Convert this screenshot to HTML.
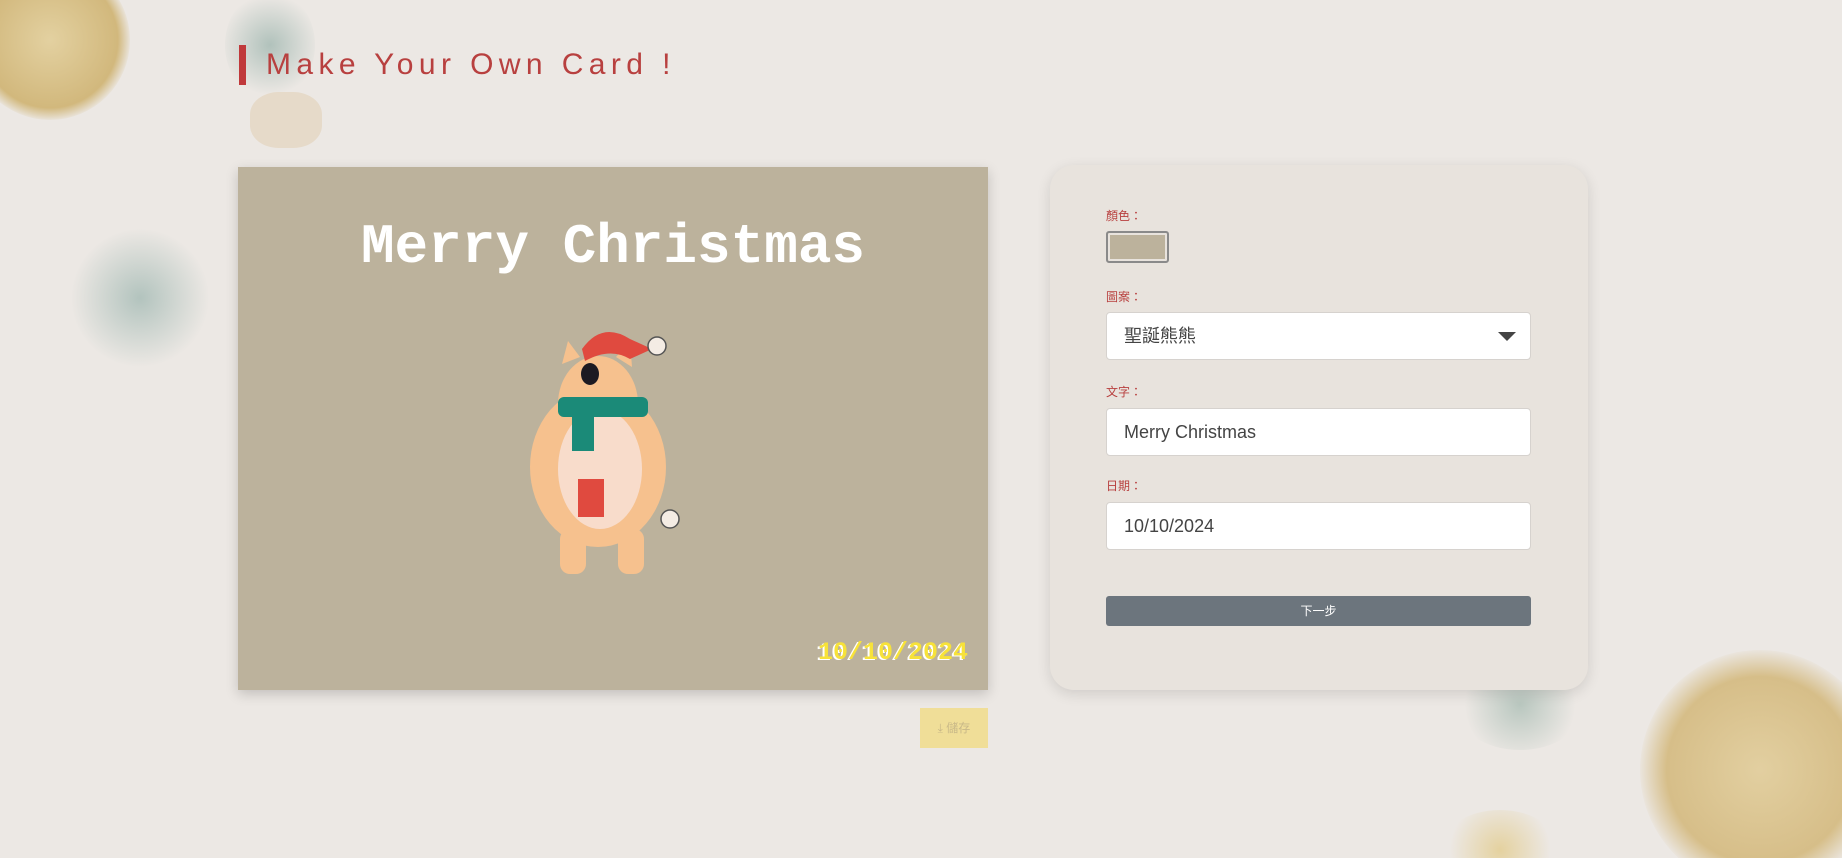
<!DOCTYPE html>
<html><head><meta charset="utf-8"><style>
*{margin:0;padding:0;box-sizing:border-box}
html,body{width:1842px;height:858px;overflow:hidden}
body{background:#ece8e4;position:relative;font-family:"Liberation Sans","Noto Sans CJK TC",sans-serif}
.deco{position:absolute;border-radius:50%;opacity:.75}
.title{position:absolute;left:239px;top:45px;height:40px;border-left:7px solid #c0393b;padding-left:20px;font-size:30px;letter-spacing:5.4px;color:#b8403f;line-height:40px}
.card{position:absolute;left:238px;top:167px;width:750px;height:523px;background:#bcb29c;box-shadow:0 4px 12px rgba(0,0,0,.18)}
.mc{position:absolute;left:0;width:100%;top:47px;text-align:center;font-family:"Liberation Mono",monospace;font-weight:bold;font-size:56px;color:#fff;line-height:66px}
.date{position:absolute;right:20px;top:471px;font-family:"Liberation Mono",monospace;font-weight:bold;font-size:25px;color:#f7e23a;text-shadow:-2px 1px 0 #fff}
.save{position:absolute;left:920px;top:708px;width:68px;height:40px;background:#f0de98;color:#c8b888;font-size:12px;line-height:40px;text-align:center}
.panel{position:absolute;left:1050px;top:165px;width:538px;height:525px;background:#e8e3dd;border-radius:24px;box-shadow:0 4px 14px rgba(0,0,0,.12)}
.lbl{position:absolute;left:56px;font-size:12px;color:#b8403f}
.inp{position:absolute;left:56px;width:425px;height:48px;background:#fff;border:1px solid #d6d2ce;border-radius:4px;font-size:18px;color:#444;padding-left:17px;line-height:46px}
.sw{position:absolute;left:56px;top:66px;width:63px;height:32px;border:2px solid #8a8a8a;border-radius:3px;background:#bcb29c;box-shadow:inset 0 0 0 2px #e8e3dd}
.btn{position:absolute;left:56px;top:431px;width:425px;height:30px;background:#6c757d;border-radius:3px;color:#fff;font-size:12px;text-align:center;line-height:30px}
</style></head><body>
<div class="deco" style="left:-30px;top:-40px;width:160px;height:160px;background:radial-gradient(circle,#e0c98a,#c9a85a 60%,rgba(236,232,228,0) 72%)"></div>
<div class="deco" style="left:225px;top:-10px;width:90px;height:110px;background:radial-gradient(circle,#9db5ae,rgba(236,232,228,0) 70%)"></div>
<div class="deco" style="left:250px;top:92px;width:72px;height:56px;background:#e4d6c0;border-radius:40%"></div>
<div class="deco" style="left:70px;top:228px;width:140px;height:140px;background:radial-gradient(circle,#9fb7b1,rgba(236,232,228,0) 70%)"></div>
<div class="deco" style="left:1640px;top:650px;width:240px;height:240px;background:radial-gradient(circle,#dfc78a,#cfb06a 55%,rgba(236,232,228,0) 72%)"></div>
<div class="deco" style="left:1455px;top:660px;width:130px;height:90px;background:radial-gradient(circle,#a8bcb3,rgba(236,232,228,0) 70%)"></div>
<div class="deco" style="left:1440px;top:810px;width:120px;height:80px;background:radial-gradient(circle,#e2ca88,rgba(236,232,228,0) 70%)"></div>
<div class="title">Make Your Own Card !</div>
<div class="card">
<div class="mc">Merry Christmas</div>
<svg style="position:absolute;left:292px;top:162px" width="160" height="255" viewBox="0 0 160 255">
<ellipse cx="68" cy="138" rx="68" ry="80" fill="#f6c18e"/>
<ellipse cx="68" cy="75" rx="40" ry="48" fill="#f6c18e"/>
<path d="M32 35 L38 12 L50 28 Z M86 28 L100 12 L102 38 Z" fill="#f6c18e"/>
<ellipse cx="70" cy="140" rx="42" ry="60" fill="#f8dccb"/>
<rect x="30" y="200" width="26" height="45" rx="10" fill="#f6c18e"/>
<rect x="88" y="200" width="26" height="45" rx="10" fill="#f6c18e"/>
<path d="M52 20 Q72 -8 100 10 L122 20 L100 30 Q80 18 55 32 Z" fill="#e04a3f"/>
<circle cx="127" cy="17" r="9" fill="#f4ece4" stroke="#555" stroke-width="1.5"/>
<ellipse cx="60" cy="45" rx="9" ry="11" fill="#1c1a22"/>
<rect x="28" y="68" width="90" height="20" rx="6" fill="#1b8a78"/>
<rect x="42" y="82" width="22" height="40" fill="#1b8a78"/>
<rect x="48" y="150" width="26" height="38" fill="#e04a3f"/>
<circle cx="140" cy="190" r="9" fill="#f4ece4" stroke="#555" stroke-width="1.5"/>
</svg>
<div class="date">10/10/2024</div>
</div>
<div class="save">⤓ 儲存</div>
<div class="panel">
<div class="lbl" style="top:42px">顏色：</div>
<div class="sw"></div>
<div class="lbl" style="top:123px">圖案：</div>
<div class="inp" style="top:147px">聖誕熊熊<span style="position:absolute;right:14px;top:19px;width:0;height:0;border-left:9px solid transparent;border-right:9px solid transparent;border-top:9px solid #444"></span></div>
<div class="lbl" style="top:218px">文字：</div>
<div class="inp" style="top:243px">Merry Christmas</div>
<div class="lbl" style="top:312px">日期：</div>
<div class="inp" style="top:337px">10/10/2024</div>
<div class="btn">下一步</div>
</div>
</body></html>
